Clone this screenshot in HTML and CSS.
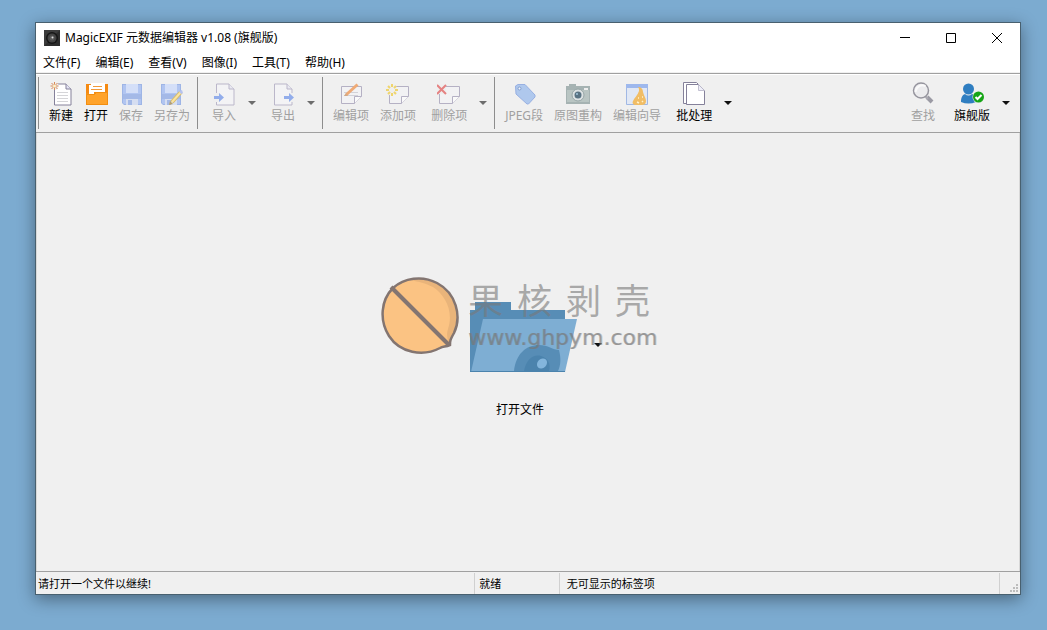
FILE: index.html
```html
<!DOCTYPE html>
<html lang="zh-CN">
<head>
<meta charset="utf-8">
<title>MagicEXIF 元数据编辑器</title>
<link rel="stylesheet" href="styles.css">
</head>
<body>
<div class="window">
  <header class="titlebar">
    <svg class="app-icon" viewBox="0 0 16 16"><rect width="16" height="16" fill="#2c2c2c"/><path d="M0 0h16L0 16z" fill="#3c3c3c"/><circle cx="8" cy="8" r="6" fill="#161616"/><circle cx="8" cy="8" r="4.500" fill="#444"/><circle cx="8" cy="8" r="2.500" fill="#5a5a5a"/><circle cx="8.500" cy="7.500" r="1" fill="#ddd"/></svg>
    <h1 class="title">MagicEXIF 元数据编辑器 v1.08 (旗舰版)</h1>
    <div class="window-buttons">
      <button class="window-button" aria-label="最小化"><svg viewBox="0 0 10 10"><path d="M0 4.500h10" stroke="#000"/></svg></button>
      <button class="window-button" aria-label="最大化"><svg viewBox="0 0 10 10"><path d="M.5.5h9v9h-9z" fill="none" stroke="#000"/></svg></button>
      <button class="window-button" aria-label="关闭"><svg viewBox="0 0 10 10"><path d="M0 0l10 10M10 0L0 10" stroke="#000"/></svg></button>
    </div>
  </header>
  <nav class="menubar">
    <button class="menu">文件(F)</button>
    <button class="menu">编辑(E)</button>
    <button class="menu">查看(V)</button>
    <button class="menu">图像(I)</button>
    <button class="menu">工具(T)</button>
    <button class="menu">帮助(H)</button>
  </nav>
  <div class="toolbar">
    <div class="group">
      <button class="tool"><svg class="icon" viewBox="0 0 24 24"><path d="M5.500 2H17l5 5v16H5.500z" fill="#fff" stroke="#85819a"/><path d="M17 2v5h5" fill="#e4e4f4" stroke="#85819a"/><path d="M8 10.500h11M8 13.500h11M8 16.500h11M8 19.500h11" stroke="#d5d5d8"/><circle cx="5.500" cy="4" r="4" fill="#efefef"/><path d="M5.500 0v8M1.500 4h8M2.500 1l6 6M8.500 1l-6 6" stroke="#d88a58"/><circle cx="5.500" cy="4" r="1.500" fill="#fff3c8"/></svg>新建</button>
      <button class="tool"><svg class="icon" viewBox="0 0 24 24"><path d="M2 2h22v21H2z" fill="#f29318"/><path d="M2 2h22v9H2z" fill="#f58a12"/><path d="M7 1h14v9H10v2H5V3h2z" fill="#fff"/><path d="M9 4.500h9M7 7.500h11" stroke="#f29a3a"/><path d="M2.500 12.500h8l2-2h11v12h-21z" fill="#ffa32b" stroke="#f28e11"/></svg>打开</button>
      <button class="tool" disabled><svg class="icon" viewBox="0 0 24 24"><path d="M3 2h20v21H5l-2-2z" fill="#9eb5e6"/><path d="M4 3h18v19H5l-1-1z" fill="#b1c5f1"/><path d="M7 2h12v9H7z" fill="#d4dff8"/><path d="M4 12h18v5H4z" fill="#a4b9e7"/><path d="M7 17h12v6H7z" fill="#d6def1"/><path d="M9 18h4v5H9z" fill="#a4b9e7"/></svg>保存</button>
      <button class="tool" disabled><svg class="icon" viewBox="0 0 24 24"><path d="M1 2h20v21H3l-2-2z" fill="#9eb5e6"/><path d="M2 3h18v19H3l-1-1z" fill="#b1c5f1"/><path d="M5 2h12v9H5z" fill="#d4dff8"/><path d="M2 12h18v5H2z" fill="#a4b9e7"/><path d="M5 17h12v6H5z" fill="#d6def1"/><path d="M7 18h4v5H7z" fill="#a4b9e7"/><path d="M12 20l9-10" stroke="#d8bb68" stroke-width="4"/><path d="M12 20l9-10" stroke="#fae4a0" stroke-width="2"/><path d="M9 23l1-4 3 3z" fill="#b7a06c"/><path d="M19 9l3-1 1 3-2 1z" fill="#b6c3ef"/></svg>另存为</button>
    </div>
    <div class="group">
      <div class="split"><button class="tool" disabled><svg class="icon" viewBox="0 0 24 24"><path d="M4.500 2H17l5 5v16H4.500z" fill="#f3f3f5" stroke="#bbb7ca"/><path d="M17 2v5h5" fill="#e9e9f1" stroke="#bbb7ca"/><path d="M1 11h7v9H1z" fill="#efefef"/><path d="M2 14h5v-3l5 4.500L7 20v-3H2z" fill="#92adeb"/></svg>导入</button><button class="drop" disabled aria-label="导入选项"></button></div>
      <div class="split"><button class="tool" disabled><svg class="icon" viewBox="0 0 24 24"><path d="M3.500 2H16l5 5v16H3.500z" fill="#f3f3f5" stroke="#bbb7ca"/><path d="M16 2v5h5" fill="#e9e9f1" stroke="#bbb7ca"/><path d="M19 11h3v9h-3z" fill="#efefef"/><path d="M13 14h5v-3l5 4.500-5 4.500v-3h-5z" fill="#92adeb"/></svg>导出</button><button class="drop" disabled aria-label="导出选项"></button></div>
    </div>
    <div class="group">
      <button class="tool" disabled><svg class="icon" viewBox="0 0 24 24"><path d="M2.500 4.500h20v10l-7 7h-13z" fill="#f2f2f4" stroke="#b5b1c4"/><path d="M15.500 21.500v-7h7" fill="#fafafa" stroke="#b5b1c4"/><path d="M5 10.500h14M5 13.500h14" stroke="#d2d2d8"/><path d="M7.500 12.500l11-10" stroke="#efaa75" stroke-width="3"/><path d="M5 14l2-3 2 3z" fill="#d4a783"/></svg>编辑项</button>
      <button class="tool" disabled><svg class="icon" viewBox="0 0 24 24"><path d="M3.500 4.500h19v10l-7 7h-12z" fill="#f2f2f4" stroke="#b5b1c4"/><path d="M15.500 21.500v-7h7" fill="#fafafa" stroke="#b5b1c4"/><circle cx="6" cy="8" r="5.500" fill="#efefef"/><path d="M6 2v3M6 11v3M0 8h3M9 8h3M2 4l2 2M8 10l2 2M10 4L8 6M4 10l-2 2" stroke="#efd56e" stroke-width="2"/></svg>添加项</button>
      <div class="split"><button class="tool" disabled><svg class="icon" viewBox="0 0 24 24"><path d="M2.500 4.500h20v10l-7 7h-13z" fill="#f2f2f4" stroke="#b5b1c4"/><path d="M15.500 21.500v-7h7" fill="#fafafa" stroke="#b5b1c4"/><path d="M0 2h9v10H0z" fill="#efefef"/><path d="M0 3l9 9M9 3l-9 9" stroke="#e58282" stroke-width="2"/></svg>删除项</button><button class="drop" disabled aria-label="删除选项"></button></div>
    </div>
    <div class="group">
      <button class="tool" disabled><svg class="icon" viewBox="0 0 24 24"><path d="M3.500 4L6 2.500h7L23 13v2l-6.500 7H15L4 12z" fill="#afc8ed" stroke="#98b0e2"/><circle cx="7.500" cy="6.500" r="1.500" fill="#eef3fc" stroke="#829dcc"/></svg>JPEG段</button>
      <button class="tool" disabled><svg class="icon" viewBox="0 0 24 24"><path d="M0 4h3V2h7v2h14v18H0z" fill="#a6b3b3"/><path d="M1 8h22v12H1z" fill="#b9c5c3"/><path d="M18 7h4" stroke="#eee" stroke-width="2"/><circle cx="12" cy="13" r="6" fill="#dce2e3" stroke="#97a6a7"/><circle cx="12" cy="13" r="3.500" fill="#597383"/><circle cx="11" cy="12" r="1" fill="#a2c4da"/></svg>原图重构</button>
      <button class="tool" disabled><svg class="icon" viewBox="0 0 24 24"><path d="M1.500 2.500h21v20h-21z" fill="#e1e8f5" stroke="#a1b8e4"/><path d="M1 2h22v4H1z" fill="#9eb8ed"/><path d="M13 5c3 0 5 2 5 5 1 4 3 6 3 9 0 3-2 4-4 4H11c-3 0-4-2-3-4 1-3 5-6 6-10 0-2 0-3-1-4z" fill="#f1bd65"/><path d="M13 16h1M17 15h1M12 20l2 1M17 19l1 1" fill="none" stroke="#fff2cc" stroke-width="1.500"/></svg>编辑向导</button>
      <div class="split"><button class="tool"><svg class="icon" viewBox="0 0 24 24"><path d="M1.500.500h13l3 3v18h-16z" fill="#fff" stroke="#85819a"/><path d="M4.500 2.500h12l6 6v14h-18z" fill="#fff" stroke="#85819a"/><path d="M16.500 2.500v6h6" fill="#eeeef8" stroke="#c1bfd0"/></svg>批处理</button><button class="drop" aria-label="批处理选项"></button></div>
    </div>
    <div class="group group-end">
      <button class="tool" disabled><svg class="icon" viewBox="0 0 24 24"><path d="M16 15l5 5" stroke="#9b9aa4" stroke-width="4"/><path d="M14 14l3 3" stroke="#aaa9b2" stroke-width="2"/><circle cx="10" cy="8.500" r="7.500" fill="#ececee" stroke="#96959e" stroke-width="1.500"/><path d="M4.500 10a7 7 0 0 1 10-6" fill="none" stroke="#fafafa" stroke-width="2"/></svg>查找</button>
      <div class="split split-user"><button class="tool"><svg class="icon" viewBox="0 0 24 24"><circle cx="8.500" cy="7" r="5.500" fill="#2f7ec1"/><path d="M1 20c0-4 1-7 4-8q3.500 3 7 0c3 1 4 4 4 8q-7.500 3-15 0z" fill="#2f7ec1"/><circle cx="18.500" cy="15" r="6" fill="#efefef"/><circle cx="18.500" cy="15" r="5.500" fill="#16a516"/><path d="M15.500 15l2 2 4-4" fill="none" stroke="#fff" stroke-width="2"/></svg>旗舰版</button><button class="drop" aria-label="版本选项"></button></div>
    </div>
  </div>
  <main class="workspace">
    <div class="open-panel">
      <button class="open-file">
        <svg class="folder" viewBox="0 0 107 70"><path d="M0 8h5V0h36v8h54v62H0z" fill="#578db6"/><path d="M13 17h94L95 70H1z" fill="#7eaed3"/><path d="M44 69c2-17 12-26 25-26 9 0 14 5 20 5 2 8 2 15-1 21z" fill="#578db6"/><path d="M54 69c2-11 9-17 17-15 7 2 10 8 8 15z" fill="#4b83ad"/><ellipse cx="72" cy="61.500" rx="5.500" ry="4.500" transform="rotate(-45 72 61.500)" fill="#83b5dc"/><path d="M0 69.500h95" stroke="#4b83ad"/></svg>
        <span>打开文件</span>
      </button>
      <button class="drop open-drop" aria-label="最近的文件"></button>
    </div>
    <div class="watermark">
      <svg class="nut" viewBox="0 0 78 78"><path d="M12 11C23 1 41-2 56 6c19 10 25 33 17 50-4 7-4 8-4 12-5 2-7 1-10 3C42 80 19 76 8 59-2 43 0 23 12 11z" fill="#fbc383"/><path d="M30 3c12-2 24 1 32 8 12 10 17 28 11 44-4 7-4 8-4 12l-2-2c0-4-2-6 0-13C73 34 64 18 52 10c-8-4-14-5-22-7z" fill="#e9b47a"/><path d="M12 11C23 1 41-2 56 6c19 10 25 33 17 50-4 7-4 8-4 12-5 2-7 1-10 3C42 80 19 76 8 59-2 43 0 23 12 11z" fill="none" stroke="#837571" stroke-width="2.500"/><path d="M10 10l58 58" stroke="#837571" stroke-width="4"/></svg>
      <div class="brand"><div class="brand-name"><span>果</span><span>核</span><span>剥</span><span>壳</span></div><div class="brand-url">www.ghpym.com</div></div>
    </div>
  </main>
  <footer class="statusbar">
    <div class="status status-message">请打开一个文件以继续!</div>
    <div class="status status-state">就绪</div>
    <div class="status status-tags">无可显示的标签项</div>
    <div class="status status-grip"><svg class="grip" viewBox="0 0 8 8"><path d="M6 0h2v2H6zM3 3h2v2H3zM6 3h2v2H6zM0 6h2v2H0zM3 6h2v2H3zM6 6h2v2H6z" fill="#bcbcbc"/></svg></div>
  </footer>
</div>
</body>
</html>
```
FILE: styles.css
```css
* { box-sizing: border-box; }
body {
  margin: 0;
  min-height: 100vh;
  padding: 22px 26px 35px 35px;
  display: flex;
  background: #7cabd0;
  color: #000;
  font: 12px/16px "Noto Sans", "Noto Sans CJK SC", sans-serif;
}
button {
  margin: 0;
  padding: 0;
  border: 0;
  background: none;
  color: inherit;
  font: inherit;
  white-space: nowrap;
}
svg { display: block; }
.window {
  flex: 1;
  min-width: 0;
  display: flex;
  flex-direction: column;
  border: 1px solid #48606f;
  background: #f0f0f0;
  box-shadow: 0 4px 16px rgba(0, 0, 0, 0.4);
}
.titlebar {
  height: 29px;
  display: flex;
  align-items: center;
  padding-left: 8px;
  background: #fff;
}
.app-icon { width: 16px; height: 16px; }
.title {
  flex: 1;
  margin: 0 0 0 5px;
  font-size: 12px;
  font-weight: 400;
}
.window-buttons { display: flex; align-self: stretch; }
.window-button {
  width: 46px;
  display: flex;
  align-items: center;
  justify-content: center;
}
.window-button svg { width: 10px; height: 10px; }
.menubar {
  height: 21px;
  display: flex;
  align-items: center;
  gap: 15px;
  padding: 2px 7px 0;
  background: #fff;
  border-bottom: 1px solid #f0f0f0;
}
.toolbar {
  display: flex;
  height: 60px;
  padding: 3px 10px 3px 2px;
  border-top: 1px solid #a0a0a0;
  border-bottom: 1px solid #a0a0a0;
  box-shadow: inset 0 1px #fff;
}
.group {
  display: flex;
  gap: 11px;
  padding: 5px 7px 0 10px;
  border-left: 1px solid #8d8d8d;
}
.group-end {
  margin-left: auto;
  padding-right: 0;
  border-left: 0;
}
.tool {
  display: flex;
  flex-direction: column;
  align-items: center;
  gap: 2px;
}
.tool:disabled { color: #a0a0a0; }
.icon { width: 24px; height: 24px; }
.split { display: flex; gap: 12px; padding-left: 4px; }
.split-user { padding-left: 8px; }
.drop {
  width: 8px;
  display: flex;
  justify-content: flex-end;
}
.drop::before {
  content: "";
  margin-top: 19px;
  border: 4px solid transparent;
  border-top-color: #111;
  border-bottom: 0;
}
.drop:disabled::before { border-top-color: #6d6d6d; }
.workspace {
  position: relative;
  flex: 1;
  display: flex;
  align-items: center;
  justify-content: center;
  border: 1px solid #d8d8d8;
  border-width: 0 1px 0 1px;
}
.open-panel { display: flex; }
.open-file {
  width: 132px;
  display: flex;
  flex-direction: column;
  align-items: center;
  gap: 30px;
  padding-top: 16px;
}
.folder { width: 107px; height: 70px; margin-left: 7px; }
.open-drop {
  width: 16px;
  align-items: center;
  padding-bottom: 34px;
}
.watermark {
  position: absolute;
  top: calc(50% - 75px);
  left: calc(50% - 147px);
  display: flex;
  gap: 9px;
  pointer-events: none;
}
.nut { width: 78px; height: 78px; }
.brand { color: rgba(120, 120, 120, 0.6); }
.brand-name {
  display: flex;
  gap: 14px;
  font: 400 35px/44px "Noto Sans CJK SC", sans-serif;
}
.brand-url {
  font: 22px/34px "DejaVu Sans", sans-serif;
  text-shadow: 1px 0 rgba(120, 120, 120, 0.4);
}
.statusbar {
  height: 23px;
  display: flex;
  border-top: 1px solid #a0a0a0;
  font-size: 11px;
}
.status { display: flex; align-items: center; margin-top: 1px; }
.status + .status { border-left: 1px solid #d0d0d0; }
.status-message { flex: 445; padding-left: 2px; }
.status-state { flex: 81; padding-left: 4px; }
.status-tags { flex: 441; padding-left: 7px; }
.status-grip {
  width: 21px;
  align-items: flex-end;
  justify-content: flex-end;
  padding: 2px;
}
.grip { width: 8px; height: 8px; }
```
